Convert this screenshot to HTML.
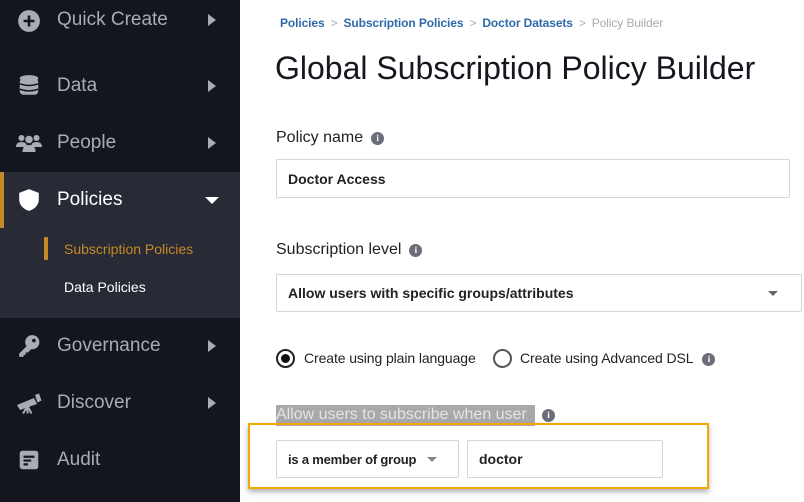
<!DOCTYPE html>
<html><head><meta charset="utf-8"><style>
*{margin:0;padding:0;box-sizing:border-box}
body{width:804px;height:502px;overflow:hidden;background:#fff;font-family:"Liberation Sans",sans-serif;position:relative}
.side{position:absolute;left:0;top:0;width:240px;height:502px;background:#13151f}
.act{position:absolute;left:0;top:172px;width:240px;height:146px;background:#282b36}
.bar{position:absolute;left:0;top:172px;width:4px;height:56px;background:#c58a25}
.it{position:absolute;left:57px;font-size:19px;color:#a9abb5;line-height:24px}
.ic{position:absolute;left:17px;width:24px;height:24px}
.ar{position:absolute;left:208px;width:0;height:0;border-top:6px solid transparent;border-bottom:6px solid transparent;border-left:8px solid #a9abb5}
.sub{position:absolute;left:64px;font-size:14px;line-height:18px}
.m{position:absolute}
.bc{top:16px;left:280px;font-size:12px;font-weight:bold;color:#2f6aa8;white-space:nowrap;letter-spacing:-0.1px}
.bc span.s{color:#aaa;font-weight:normal;margin:0 6px}
.inp{position:absolute;border:1px solid #d3d5db;border-radius:2px;background:#fff;font-size:14px;font-weight:bold;color:#222;padding-left:11px;display:flex;align-items:center}
.lbl{position:absolute;font-size:16px;color:#222;left:276px}
.info{display:inline-block;width:13px;height:13px;border-radius:50%;background:#6b6e78;color:#fff;font-size:9px;font-weight:bold;text-align:center;line-height:13px;vertical-align:1px;margin-left:8px;font-family:"Liberation Serif",serif}
.caret{position:absolute;width:0;height:0;border-left:5px solid transparent;border-right:5px solid transparent;border-top:5px solid #666}
</style></head><body>
<div class="side"></div>
<div class="act"></div>
<div class="bar"></div>
<svg class="ic" style="top:9px" viewBox="0 0 22 22"><circle cx="11" cy="11" r="10" fill="#a9abb5"/><path d="M11 6v10M6 11h10" stroke="#13151f" stroke-width="2.4"/></svg>
<div class="it" style="top:8px">Quick Create</div><div class="ar" style="top:14px"></div>
<svg class="ic" style="top:74px" viewBox="0 0 22 22"><ellipse cx="11" cy="4" rx="8.5" ry="3" fill="#a9abb5"/><rect x="2.5" y="4" width="17" height="15" rx="3.5" fill="#a9abb5"/><path d="M2.5 9q8.5 3 17 0M2.5 14q8.5 3 17 0" stroke="#13151f" stroke-width="1.4" fill="none"/></svg>
<div class="it" style="top:74px">Data</div><div class="ar" style="top:80px"></div>
<svg class="ic" style="top:131px;left:16px;width:26px" viewBox="0 0 26 22"><circle cx="5.5" cy="6" r="3" fill="#a9abb5"/><circle cx="20.5" cy="6" r="3" fill="#a9abb5"/><circle cx="13" cy="7.5" r="3.8" fill="#a9abb5"/><path d="M0 15q0-5 5.5-5t5.5 5zM15 15q0-5 5.5-5t5.5 5zM6.5 20q0-7 6.5-7t6.5 7z" fill="#a9abb5"/></svg>
<div class="it" style="top:131px">People</div><div class="ar" style="top:137px"></div>
<svg class="ic" style="top:188px" viewBox="0 0 22 22"><path d="M11 1l9 3.5v6c0 5.5-4.5 9-9 10.5C6.5 19.5 2 16 2 10.5v-6z" fill="#fff"/></svg>
<div class="it" style="top:188px;color:#fff">Policies</div>
<div class="m" style="left:205px;top:197px;width:0;height:0;border-left:7px solid transparent;border-right:7px solid transparent;border-top:7px solid #fff"></div>
<div class="m" style="left:44px;top:237px;width:4px;height:23px;background:#c58a25;border-radius:1px"></div>
<div class="sub" style="top:240px;color:#c58a25">Subscription Policies</div>
<div class="sub" style="top:278px;color:#fff">Data Policies</div>
<svg class="ic" style="top:334px" viewBox="0 0 22 22"><circle cx="14" cy="7.5" r="6.5" fill="#a9abb5"/><circle cx="15.5" cy="6" r="1.7" fill="#13151f"/><path d="M10 10l-8 8v3h4v-2h2v-2h2l3-3z" fill="#a9abb5"/></svg>
<div class="it" style="top:334px">Governance</div><div class="ar" style="top:340px"></div>
<svg class="ic" style="top:391px;left:16px;width:26px" viewBox="0 0 26 22"><path d="M1 13l17-7 3 6-17 6zM19 3l4-1.5 2.5 7-4 2z" fill="#a9abb5"/><path d="M11 15l-4 6.5M12 15l3.5 6.5M11.5 15v6.5" stroke="#a9abb5" stroke-width="2"/></svg>
<div class="it" style="top:391px">Discover</div><div class="ar" style="top:397px"></div>
<svg class="ic" style="top:448px" viewBox="0 0 22 22"><rect x="2.5" y="2.5" width="17" height="17" rx="2.5" fill="#a9abb5"/><path d="M6 8h10M6 11.5h7M6 15h4" stroke="#13151f" stroke-width="2"/></svg>
<div class="it" style="top:448px">Audit</div>

<div class="m bc">Policies<span class="s">&gt;</span>Subscription Policies<span class="s">&gt;</span>Doctor Datasets<span class="s">&gt;</span><span style="color:#a8abb3;font-weight:normal">Policy Builder</span></div>
<div class="m" style="left:275px;top:50px;font-size:32px;color:#15171f;white-space:nowrap">Global Subscription Policy Builder</div>
<div class="lbl" style="top:129px">Policy name<span class="info">i</span></div>
<div class="inp" style="left:276px;top:159px;width:514px;height:39px">Doctor Access</div>
<div class="lbl" style="top:241px">Subscription level<span class="info">i</span></div>
<div class="inp" style="left:276px;top:274px;width:526px;height:38px">Allow users with specific groups/attributes</div>
<div class="caret" style="left:768px;top:291px"></div>
<div class="m" style="left:276px;top:349px;width:19px;height:19px;border:2px solid #222;border-radius:50%"></div>
<div class="m" style="left:281px;top:354px;width:9px;height:9px;background:#111;border-radius:50%"></div>
<div class="m" style="left:304px;top:350px;font-size:14px;color:#222;letter-spacing:-0.1px">Create using plain language</div>
<div class="m" style="left:493px;top:349px;width:19px;height:19px;border:2px solid #555;border-radius:50%"></div>
<div class="m" style="left:520px;top:350px;font-size:14px;color:#222;letter-spacing:-0.1px">Create using Advanced DSL<span class="info" style="margin-left:9px">i</span></div>
<div class="m" style="left:276px;top:405px;width:259px;height:21px;background:#a9a9a9"></div>
<div class="m" style="left:276px;top:406px;font-size:16px;color:#e4e4e4;white-space:nowrap">Allow users to subscribe when user</div>
<div class="m" style="left:542px;top:409px;width:13px;height:13px;border-radius:50%;background:#6b6e78;color:#fff;font-size:9px;font-weight:bold;text-align:center;line-height:13px;font-family:'Liberation Serif',serif">i</div>
<div class="m" style="left:248px;top:423px;width:461px;height:66px;border:2px solid #f5a800;box-shadow:0 3px 5px rgba(0,0,0,.3)"></div>
<div class="inp" style="left:276px;top:440px;width:183px;height:38px;padding-left:11px;font-size:13px;letter-spacing:-0.2px">is a member of group</div>
<div class="caret" style="left:427px;top:457px;border-top-color:#888"></div>
<div class="inp" style="left:467px;top:440px;width:196px;height:38px;padding-left:11px">doctor</div>
</body></html>
